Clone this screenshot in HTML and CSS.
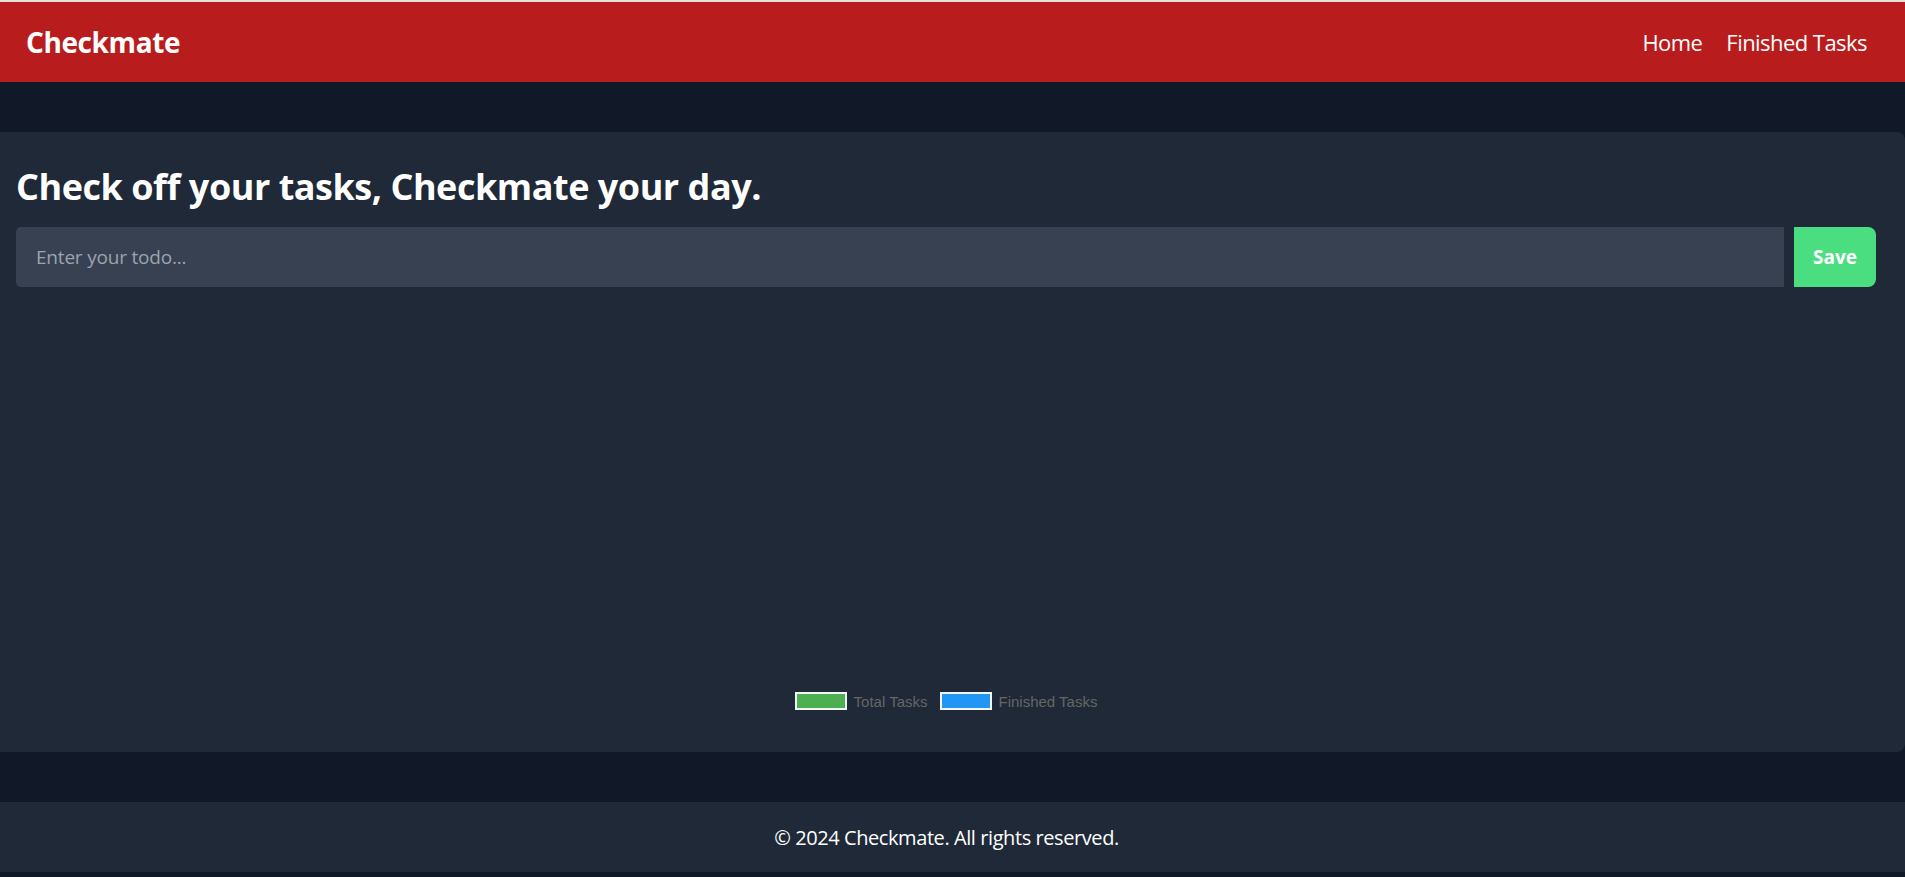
FILE: index.html
```html
<!DOCTYPE html>
<html lang="en">
<head>
<meta charset="utf-8">
<title>Checkmate</title>
<link rel="stylesheet" href="styles.css">
</head>
<body>
<div class="topline"></div>
<header class="header">
  <div class="brand">Checkmate</div>
  <nav class="nav">
    <a href="#" class="nav-link">Home</a>
    <a href="#" class="nav-link">Finished Tasks</a>
  </nav>
</header>
<main class="main">
  <section class="card">
    <h1 class="title">Check off your tasks, Checkmate your day.</h1>
    <form class="todo-form">
      <input class="todo-input" type="text" placeholder="Enter your todo...">
      <button class="save-btn" type="button">Save</button>
    </form>
    <div class="chart-area">
      <div class="legend">
        <span class="legend-item"><span class="legend-box green"></span><span class="legend-label">Total Tasks</span></span>
        <span class="legend-item"><span class="legend-box blue"></span><span class="legend-label">Finished Tasks</span></span>
      </div>
    </div>
  </section>
</main>
<footer class="footer">
  <p class="footer-text">© 2024 Checkmate. All rights reserved.</p>
</footer>
</body>
</html>
```

FILE: styles.css
```css
* { box-sizing: border-box; }
html, body { margin: 0; padding: 0; }
body {
  background: #111827;
  font-family: "Open Sans", "Noto Sans", sans-serif;
  color: #fff;
  height: 877px;
  overflow: hidden;
}
.topline { height: 2px; background: #e4e1d8; }
.header {
  height: 80px;
  background: #b91c1c;
  display: flex;
  align-items: center;
  justify-content: space-between;
  padding: 0 38px 0 26px;
}
.brand {
  font-size: 28px;
  font-weight: 700;
  letter-spacing: -0.4px;
}
.nav { display: flex; gap: 24px; }
.nav-link {
  color: #fff;
  text-decoration: none;
  font-size: 22px;
  letter-spacing: -0.55px;
}
.main { padding: 50px 0; }
.card {
  background: #1f2937;
  height: 620px;
  border-radius: 0 8px 8px 0;
  padding: 32px 29px 0 16px;
  display: flex;
  flex-direction: column;
}
.title {
  margin: 0;
  font-size: 36px;
  line-height: 45px;
  font-weight: 700;
  letter-spacing: -0.47px;
}
.todo-form {
  display: flex;
  margin-top: 18px;
  height: 60px;
}
.todo-input {
  flex: 1;
  background: #374151;
  border: none;
  border-radius: 5px 0 0 5px;
  padding: 0 20px;
  font-family: inherit;
  font-size: 19px;
  color: #fff;
  outline: none;
}
.todo-input::placeholder { color: #9ca3af; letter-spacing: -0.2px; }
.save-btn {
  margin-left: 10px;
  width: 82px;
  background: #4ade80;
  border: none;
  border-radius: 0 8px 8px 0;
  color: #fff;
  font-family: inherit;
  font-weight: 700;
  font-size: 19px;
}
.chart-area {
  flex: 1;
  display: flex;
  align-items: flex-end;
  justify-content: center;
  padding-bottom: 42px;
}
.legend { display: flex; gap: 12px; align-items: center; }
.legend-item { display: flex; align-items: center; gap: 7px; }
.legend-box {
  width: 52px;
  height: 18px;
  border: 2px solid #f3f4f6;
}
.legend-box.green { background: #4caf50; }
.legend-box.blue { background: #2196f3; }
.legend-label {
  font-family: "Liberation Sans", Arial, sans-serif;
  font-size: 15px;
  color: #666;
}
.footer {
  height: 70px;
  background: #1f2937;
  display: flex;
  align-items: center;
  justify-content: center;
  padding-right: 12px;
}
.footer-text {
  margin: 0;
  font-size: 20px;
  letter-spacing: -0.42px;
}
```
